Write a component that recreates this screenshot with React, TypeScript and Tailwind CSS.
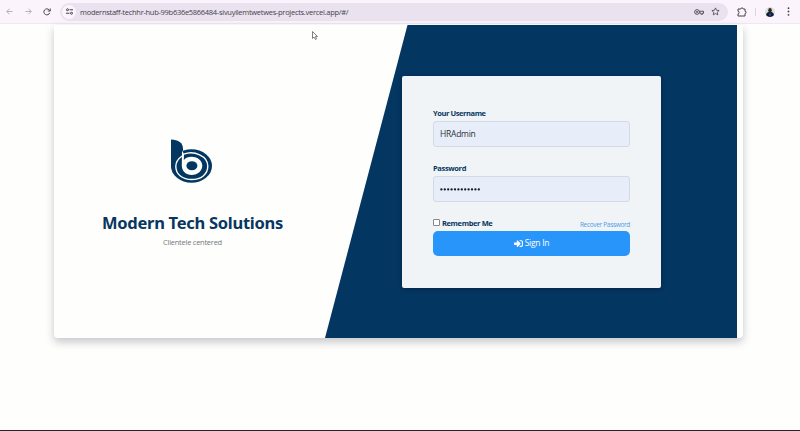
import React from "react";
import { FaSignInAlt } from "react-icons/fa";

function BackIcon({ flip = false }: { flip?: boolean }) {
  return (
    <svg className={flip ? "h-[7px] w-[7px] -scale-x-100" : "h-[7px] w-[7px]"} viewBox="0 0 14 14" fill="none" stroke="#a9a5ac" strokeWidth="1.7">
      <path d="M13 7H2M7 1.5L1.5 7 7 12.5" />
    </svg>
  );
}

function Toolbar() {
  return (
    <header className="flex h-6 items-center border-b border-[#eee8f2] bg-[#fbf4fd]">
      <div className="ml-[6px] flex items-center gap-3">
        <BackIcon />
        <BackIcon flip />
        <svg className="ml-[-1px] h-2 w-2" viewBox="0 0 16 16" fill="none" stroke="#454248" strokeWidth="2">
          <path d="M13.5 9.5A6 6 0 1 1 12.3 3.8L14 5.5M14.5 1v5h-5" />
        </svg>
      </div>
      <div className="ml-[9px] flex h-[18px] w-[668px] shrink-0 items-center rounded-full bg-[#ebe2ef]">
        <div className="ml-[2px] flex h-[14px] w-[14px] items-center justify-center rounded-full bg-[#fbf4fd]">
          <svg className="h-[7px] w-[7px]" viewBox="0 0 14 14" fill="none" stroke="#454248" strokeWidth="2">
            <circle cx="3" cy="3.5" r="2" />
            <path d="M7 3.5h7M0 10.5h7" />
            <circle cx="11" cy="10.5" r="2" />
          </svg>
        </div>
        <span className="ml-[4px] mt-[2px] grow whitespace-nowrap text-[7.5px] leading-none tracking-[-0.285px] text-[#464149]">
          modernstaff-techhr-hub-99b636e5866484-sivuyilemtwetwes-projects.vercel.app/#/
        </span>
        <svg className="h-[6px] w-[10px]" viewBox="0 0 20 12" fill="none" stroke="#454248" strokeWidth="1.8">
          <circle cx="6" cy="6" r="4.7" />
          <circle cx="6" cy="6" r="1.2" />
          <path d="M10.5 4.5H19v4h-2v2h-3V8h-3.5" />
        </svg>
        <svg className="ml-[7px] mr-[8px] h-[9px] w-[9px]" viewBox="0 0 18 18" fill="none" stroke="#454248" strokeWidth="1.6">
          <path d="M9 1.8l2.2 4.7 5.1.6-3.8 3.5 1 5.1L9 13.1l-4.5 2.6 1-5.1L1.700 7.100l5.100-.6z" />
        </svg>
      </div>
      <svg className="ml-[9px] h-[10px] w-[10px] shrink-0" viewBox="0 0 20 20" fill="none" stroke="#454248" strokeWidth="2">
        <path d="M2 4h5.500c0-3 5-3 5 0H16v4.500c3 0 3 4.500 0 4.500v5H2v-4.500c3 0 3-5 0-5z" />
      </svg>
      <div className="ml-[8px] h-2 w-px bg-[#ded4e3]" />
      <svg className="ml-[9px] h-[10px] w-[10px] shrink-0" viewBox="0 0 20 20">
        <circle cx="10" cy="10" r="10" fill="#d9dedf" />
        <path d="M2 16c1-5 4-6 8-6s7 1 8 6c-4 5-12 5-16 0z" fill="#101c31" />
        <ellipse cx="10" cy="6.500" rx="3.500" ry="4.500" fill="#39231f" />
        <path d="M10 11l2 4-2 4-2-4z" fill="#245c94" />
      </svg>
      <svg className="ml-[12px] h-[9px] w-[3px] shrink-0" viewBox="0 0 3 9" fill="#454248">
        <circle cx="1.500" cy="1.200" r=".9" />
        <circle cx="1.500" cy="4.500" r=".9" />
        <circle cx="1.500" cy="7.800" r=".9" />
      </svg>
    </header>
  );
}

function Logo() {
  return (
    <svg className="h-[45px] w-[43px]" viewBox="0 0 43 45">
      <path d="M0 .5C7.500.5 12 4 12 10v20L2 34 0 27z" fill="#043662" />
      <ellipse cx="20.500" cy="27" rx="20.500" ry="16.700" fill="#043662" />
      <path d="M12.800 15.200C23 11 36.800 17 36.800 27 36.800 35.500 30 40.500 20.800 40.500S4.800 35.500 4.800 27.500c0-4 2-7.500 6.200-10.500" fill="none" stroke="#fefffb" strokeWidth="1.400" />
      <path d="M11 11.500l2 3.500-.2 6c2-2 4.500-3.200 8-3.200 6 0 10.500 4 10.500 9s-4.500 9.200-10.500 9.200S10.800 32 10.800 26.500z" fill="#fefffb" />
      <ellipse cx="20.900" cy="26.800" rx="5.500" ry="4.500" fill="#043662" />
    </svg>
  );
}

function Field({ label, value, type }: { label: string; value: string; type: string }) {
  return (
    <label className="block">
      <span className="block h-[13px] text-[7.5px] font-bold leading-[10px] tracking-[-0.42px] text-[#073761]">{label}</span>
      <input
        className="block h-[26px] w-full rounded-[3px] border border-[#d4dae3] bg-[#e7eefa] px-[6px] pb-[1px] text-[8.5px] tracking-[-0.25px] text-[#303236] outline-none"
        defaultValue={value}
        type={type}
      />
    </label>
  );
}

function PasswordField() {
  return (
    <div>
      <span className="block h-[13px] text-[7.5px] font-bold leading-[10px] tracking-[-0.36px] text-[#073761]">Password</span>
      <div className="flex h-[26px] items-center rounded-[3px] border border-[#d4dae3] bg-[#e7eefa] px-[5px]">
        <svg className="h-[4px] w-[42px]" viewBox="0 0 42 4" fill="#17191d">
          {Array.from({ length: 12 }, (_, i) => (
            <circle key={i} cx={2.4 + i * 3.4} cy="2.400" r="1.150" />
          ))}
        </svg>
      </div>
    </div>
  );
}

function LoginForm() {
  return (
    <form className="mt-[51px] h-[212px] w-[259px] rounded-[2px] bg-[#f0f4f7] px-[31px] pt-[32px] shadow-[0_1px_4px_rgba(0,15,40,0.45)]">
      <Field label="Your Username" value="HRAdmin" type="text" />
      <div className="mt-[16px]">
        <PasswordField />
      </div>
      <div className="mt-[16px] flex h-[13px] items-start justify-between">
        <label className="flex items-center text-[7.5px] font-bold leading-[11px] tracking-[-0.38px] text-[#073761]">
          <input type="checkbox" className="mb-[2px] mr-[2px] h-[7px] w-[7px] appearance-none rounded-[1px] border border-[#85878b] bg-white" />
          Remember Me
        </label>
        <a className="pt-[1px] text-[6.5px] leading-[11px] tracking-[-0.32px] text-[#4d9ce6]">Recover Password</a>
      </div>
      <button type="button" className="flex h-[25px] w-full items-center justify-center gap-[2px] rounded-[5px] bg-[#2895fb] text-[8.5px] tracking-[-0.25px] text-white">
        <FaSignInAlt className="h-[9px] w-[9px]" />
        Sign In
      </button>
    </form>
  );
}

export default function App() {
  return (
    <div className="flex h-[431px] w-[800px] flex-col overflow-hidden border-b border-[#252525] bg-[#fefefd] font-['Open_Sans','Noto_Sans',sans-serif]">
      <Toolbar />
      <main className="relative ml-[54px] mt-[1px] flex h-[313px] w-[689px] rounded-b-[4px] bg-[#fefffc] shadow-[0_4px_9px_rgba(35,30,50,0.25)]">
        <svg className="absolute left-0 top-0 h-[313px] w-[684px]" viewBox="0 0 684 313">
          <path d="M353.500 0H683v313H271z" fill="#043662" />
        </svg>
        <section className="flex w-[277px] flex-col items-center pt-[114px]">
          <Logo />
          <h1 className="mt-[27px] whitespace-nowrap font-['Noto_Sans',sans-serif] text-[16.5px] font-bold leading-[24px] tracking-[-0.27px] text-[#073761]">Modern Tech Solutions</h1>
          <p className="mt-[1px] text-[7.5px] leading-[12px] tracking-[-0.25px] text-[#77777a]">Clientele centered</p>
        </section>
        <section className="relative ml-[71px]">
          <LoginForm />
        </section>
      </main>
      <svg className="absolute left-[312px] top-[31px] h-[9px] w-[6px]" viewBox="0 0 12 18" fill="#fff" stroke="#55565a" strokeWidth="1.500">
        <path d="M1 1v14l3-3 3 5 2-1-2-5h4z" />
      </svg>
    </div>
  );
}
